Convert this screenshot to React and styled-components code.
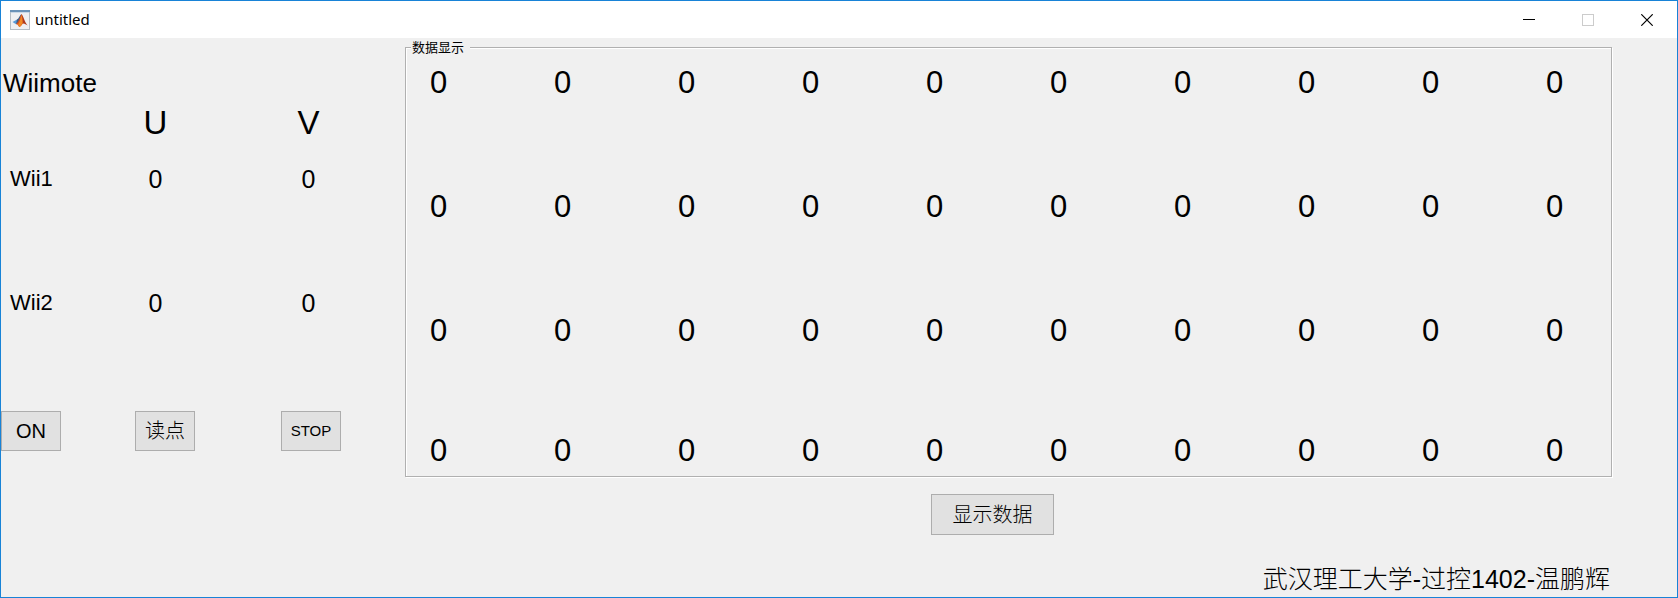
import React from "react";
import styled, { createGlobalStyle } from "styled-components";

const readings = [
  { name: "Wii1", u: 0, v: 0 },
  { name: "Wii2", u: 0, v: 0 },
];

const data = Array.from({ length: 4 }, () => Array(10).fill(0));

const App = () => {
  return (
    <>
      <GlobalStyle />
      <Window>
        <TitleBar>
          <MatlabIcon />
          <Title>untitled</Title>
          <WindowButton type="button" aria-label="Minimize">
            <svg width="12" height="12" shapeRendering="crispEdges">
              <path d="M0 5.5H12" stroke="#000" />
            </svg>
          </WindowButton>
          <WindowButton type="button" aria-label="Maximize" disabled>
            <svg width="12" height="12" shapeRendering="crispEdges">
              <rect x="0.5" y="0.5" width="11" height="11" fill="none" stroke="#ccc" />
            </svg>
          </WindowButton>
          <WindowButton type="button" aria-label="Close">
            <svg width="12" height="12">
              <path d="M0.3 0.3L11.7 11.7M11.7 0.3L0.3 11.7" stroke="#000" strokeWidth="1.2" />
            </svg>
          </WindowButton>
        </TitleBar>
        <Content>
          <Remote>
            <RemoteTable>
              <caption>Wiimote</caption>
              <thead>
                <tr>
                  <td />
                  <th scope="col">U</th>
                  <th scope="col">V</th>
                </tr>
              </thead>
              <tbody>
                {readings.map((r) => (
                  <tr key={r.name}>
                    <RowName scope="row">{r.name}</RowName>
                    <td>{r.u}</td>
                    <td>{r.v}</td>
                  </tr>
                ))}
              </tbody>
            </RemoteTable>
            <Actions>
              <Button type="button">ON</Button>
              <Button type="button">读点</Button>
              <Button type="button" $small>
                STOP
              </Button>
            </Actions>
          </Remote>
          <Main>
            <Panel>
              <legend>数据显示</legend>
              <DataTable>
                <colgroup>
                  <col span="9" />
                  <LastCol />
                </colgroup>
                <tbody>
                  {data.map((row, i) => (
                    <tr key={i}>
                      {row.map((value, j) => (
                        <td key={j}>{value}</td>
                      ))}
                    </tr>
                  ))}
                </tbody>
              </DataTable>
            </Panel>
            <ShowRow>
              <Button type="button" $wide>
                显示数据
              </Button>
            </ShowRow>
            <Credit>武汉理工大学-过控1402-温鹏辉</Credit>
          </Main>
        </Content>
      </Window>
    </>
  );
};

const MatlabIcon = () => (
  <svg width="20" height="20" viewBox="0 0 20 20" aria-hidden="true">
    <rect x="0.5" y="0.5" width="19" height="19" fill="#eef0f2" stroke="#b4bcc3" />
    <rect x="0" y="0" width="20" height="2" fill="#6a93b8" />
    <rect x="1" y="2" width="18" height="1" fill="#c9d8e6" />
    <path d="M2.5 12L7 9.6L8.6 11L6 14.2Z" fill="#5a9bd8" />
    <path d="M7 9.6C9 8.6 9.8 5.2 11.4 4L10 11L7.8 13.6L6 14.2Z" fill="#3c5f88" />
    <path d="M11.4 4C10 7 9 11.5 6 14.2C7.8 13.8 8.6 16.4 9.4 17C11.4 16.6 12 13.6 13.4 13.2L12.8 7Z" fill="#d9501e" />
    <path d="M11.4 4C13.2 5.5 14.6 12 17.6 15.4C15.6 14.6 14.2 13 12.6 13.8C12.9 10 12.4 7 11.4 4Z" fill="#b03a1c" />
    <path d="M11.4 5C10.4 9 9.8 12 8 14.4L9.4 17C11.2 16.4 11.4 14.2 12.6 13.6C12.6 10 12.2 8 11.4 5Z" fill="#f08a24" />
  </svg>
);

export default App;

const GlobalStyle = createGlobalStyle`
  body {
    margin: 0;
    font-family: "Liberation Sans", "Noto Sans CJK SC", sans-serif;
    color: #000;
  }
  * {
    box-sizing: border-box;
  }
`;
const Window = styled.div`
  display: flex;
  flex-direction: column;
  min-height: 100vh;
  border: 1px solid #1883d7;
  background-color: #f0f0f0;
`;
const TitleBar = styled.header`
  display: flex;
  align-items: center;
  height: 37px;
  padding-left: 9px;
  background-color: white;
`;
const Title = styled.h1`
  flex: 1;
  margin: 0 0 0 5px;
  padding-bottom: 2px;
  font-family: "Noto Sans", sans-serif;
  font-size: 15px;
  font-weight: 400;
  line-height: 20px;
`;
const WindowButton = styled.button`
  display: flex;
  align-items: center;
  justify-content: center;
  width: 59px;
  height: 37px;
  padding: 0 1px 0 0;
  border: none;
  background: none;
`;
const Content = styled.main`
  display: flex;
  flex: 1;
`;
const Remote = styled.section`
  flex: none;
  width: 404px;
  padding-top: 30px;
`;
const RemoteTable = styled.table`
  width: 384px;
  table-layout: fixed;
  border-collapse: collapse;
  font-size: 25px;
  line-height: 32px;

  caption {
    padding-left: 2px;
    font-size: 26px;
    line-height: 30px;
    text-align: left;
  }
  td,
  th {
    padding: 0;
    font-weight: 400;
    text-align: center;
    vertical-align: top;
  }
  thead tr {
    height: 65px;
  }
  thead td {
    width: 78px;
  }
  thead th {
    padding-top: 7px;
    font-size: 33px;
    line-height: 36px;
  }
  tbody tr {
    height: 124px;
  }
`;
const RowName = styled.th`
  && {
    padding-left: 9px;
    font-size: 22px;
    text-align: left;
  }
`;
const Actions = styled.div`
  display: grid;
  grid-template-columns: 134px 146px auto;
  justify-items: start;
`;
const Button = styled.button`
  width: ${(props) => (props.$wide ? "123px" : "60px")};
  height: ${(props) => (props.$wide ? "41px" : "40px")};
  padding: 0;
  border: 1px solid #adadad;
  background-color: #e1e1e1;
  color: #000;
  font-family: inherit;
  font-size: ${(props) => (props.$small ? "15px" : "20px")};
  font-weight: 300;
  line-height: 24px;
`;
const Main = styled.section`
  flex: 1;
  min-width: 0;
  margin-right: 65px;
  padding-top: 3px;
`;
const Panel = styled.fieldset`
  min-width: 0;
  margin: 0;
  padding: 12px 48px 8px 24px;
  border: 1px solid #b0b0b0;
  box-shadow: 1px 1px 0 white, inset 1px 1px 0 white;

  legend {
    margin-left: -19px;
    padding: 0 6px 0 1px;
    background-color: #f0f0f0;
    font-size: 13px;
    line-height: 13px;
  }
`;
const DataTable = styled.table`
  width: 100%;
  table-layout: fixed;
  border-collapse: collapse;
  font-size: 31px;
  line-height: 34px;

  td {
    padding: 0;
    vertical-align: top;
  }
  tr {
    height: 124px;
  }
  tr:nth-child(3) {
    height: 120px;
  }
  tr:last-child {
    height: 34px;
  }
`;
const LastCol = styled.col`
  width: 17px;
`;
const ShowRow = styled.div`
  display: flex;
  justify-content: center;
  margin-top: 17px;
  padding-right: 32px;
`;
const Credit = styled.p`
  margin: 27px 0 0;
  padding-right: 2px;
  font-size: 25px;
  font-weight: 300;
  line-height: 34px;
  text-align: right;
`;
